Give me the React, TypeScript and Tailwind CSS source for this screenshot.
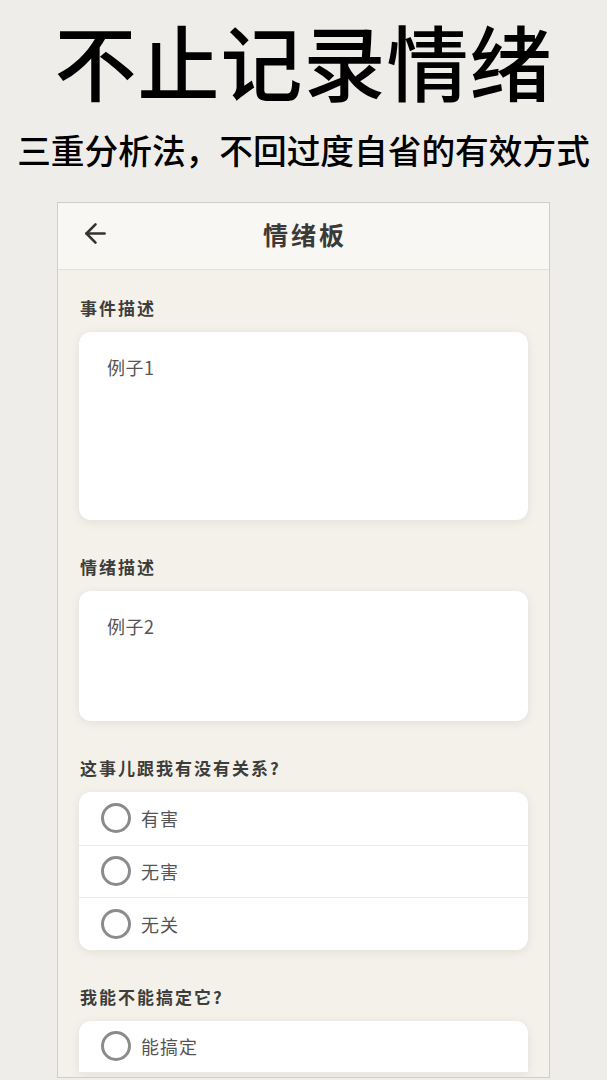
import { ArrowLeft } from 'lucide-react';

const FONT = "font-['Noto_Sans_CJK_SC',_'Noto_Sans',_sans-serif]";

function Label({ children }: { children: string }) {
  return (
    <div className="mt-[34px] mb-[11px] pl-[1px] text-[17px] leading-[26px] font-bold tracking-[2px] text-[#3d3d3b]">
      {children}
    </div>
  );
}

function TextCard({ placeholder, height }: { placeholder: string; height: string }) {
  return (
    <div className={`${height} bg-white rounded-[12px] shadow-[0_2px_10px_rgba(120,110,90,0.12)] px-[28px] pt-[22px]`}>
      <span className="text-[18px] leading-[26px] text-[#555] tracking-[0.5px]">{placeholder}</span>
    </div>
  );
}

function RadioCard({ options, cut }: { options: string[]; cut?: boolean }) {
  return (
    <div className={`bg-white shadow-[0_2px_10px_rgba(120,110,90,0.12)] overflow-hidden ${cut ? 'rounded-t-[12px]' : 'rounded-[12px]'}`}>
      {options.map((opt, i) => (
        <div
          key={opt}
          className={`h-[52.5px] flex items-center pl-[22px] gap-[10px] ${i > 0 ? 'border-t-[1.5px] border-[#ece9e2]' : ''} ${cut ? 'border-b-[1.5px] border-[#ece9e2]' : ''}`}
        >
          <span className="w-[30px] h-[30px] rounded-full border-[3px] border-[#8b8b8b]" />
          <span className="text-[18px] leading-[26px] text-[#555] tracking-[1px]">{opt}</span>
        </div>
      ))}
    </div>
  );
}

export default function App() {
  return (
    <div className={`w-[607px] h-[1080px] overflow-hidden bg-[#efede9] ${FONT}`}>
      {/* Headline */}
      <h1 className="pt-[14px] text-center text-[82px] leading-[92px] font-medium text-black tracking-[1px]">
        不止记录情绪
      </h1>
      <p className="mt-[24px] text-center text-[33.7px] leading-[40px] font-medium text-black">
        三重分析法，不回过度自省的有效方式
      </p>

      {/* Phone frame */}
      <div className="mt-[32px] ml-[57px] w-[493px] h-[876px] border-[1.5px] border-[#cfceca] overflow-hidden">
        {/* Header */}
        <div className="h-[67px] pb-[5px] bg-[#f8f7f3] border-b border-[#e3e1db] grid grid-cols-[1fr_auto_1fr] items-center">
          <div className="pl-[22px] flex items-center">
            <ArrowLeft size={31} strokeWidth={2} color="#333" />
          </div>
          <div className="text-[25px] leading-[32px] font-bold tracking-[3px] text-[#3a3a38] pl-[3px]">情绪板</div>
          <div />
        </div>

        {/* Content */}
        <div className="bg-[#f3f1ea] px-[21px] pb-[40px] h-full">
          <div className="pt-[25px] mb-[11px] pl-[1px] text-[17px] leading-[26px] font-bold tracking-[2px] text-[#3d3d3b]">
            事件描述
          </div>
          <TextCard placeholder="例子1" height="h-[188px]" />

          <Label>情绪描述</Label>
          <TextCard placeholder="例子2" height="h-[130px]" />

          <Label>这事儿跟我有没有关系?</Label>
          <RadioCard options={['有害', '无害', '无关']} />

          <Label>我能不能搞定它?</Label>
          <RadioCard options={['能搞定']} cut />
        </div>
      </div>
    </div>
  );
}
